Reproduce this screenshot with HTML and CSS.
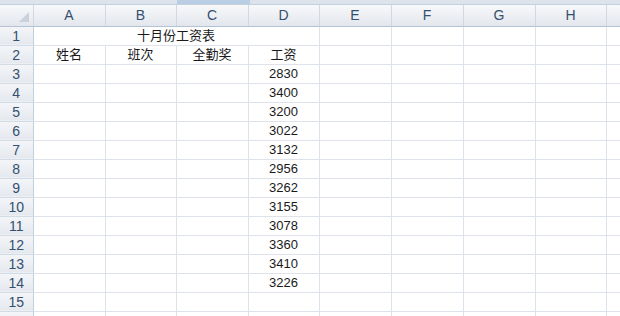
FILE: index.html
```html
<!DOCTYPE html>
<html>
<head>
<meta charset="utf-8">
<link rel="stylesheet" href="styles.css">
</head>
<body>
<div class="topstrip"><div class="sel"></div></div>
<table class="sheet">
<colgroup>
<col class="rh"><col class="c72"><col class="c71"><col class="c72"><col class="c71"><col class="c72"><col class="c72"><col class="c72"><col class="c71"><col class="crest">
</colgroup>
<tr class="hdr">
<th class="corner"><span class="tri"></span></th><th>A</th><th>B</th><th>C</th><th>D</th><th>E</th><th>F</th><th>G</th><th>H</th><th></th>
</tr>
<tr><th>1</th><td colspan="4">十月份工资表</td><td></td><td></td><td></td><td></td><td></td></tr>
<tr><th>2</th><td>姓名</td><td>班次</td><td>全勤奖</td><td>工资</td><td></td><td></td><td></td><td></td><td></td></tr>
<tr><th>3</th><td></td><td></td><td></td><td>2830</td><td></td><td></td><td></td><td></td><td></td></tr>
<tr><th>4</th><td></td><td></td><td></td><td>3400</td><td></td><td></td><td></td><td></td><td></td></tr>
<tr><th>5</th><td></td><td></td><td></td><td>3200</td><td></td><td></td><td></td><td></td><td></td></tr>
<tr><th>6</th><td></td><td></td><td></td><td>3022</td><td></td><td></td><td></td><td></td><td></td></tr>
<tr><th>7</th><td></td><td></td><td></td><td>3132</td><td></td><td></td><td></td><td></td><td></td></tr>
<tr><th>8</th><td></td><td></td><td></td><td>2956</td><td></td><td></td><td></td><td></td><td></td></tr>
<tr><th>9</th><td></td><td></td><td></td><td>3262</td><td></td><td></td><td></td><td></td><td></td></tr>
<tr><th>10</th><td></td><td></td><td></td><td>3155</td><td></td><td></td><td></td><td></td><td></td></tr>
<tr><th>11</th><td></td><td></td><td></td><td>3078</td><td></td><td></td><td></td><td></td><td></td></tr>
<tr><th>12</th><td></td><td></td><td></td><td>3360</td><td></td><td></td><td></td><td></td><td></td></tr>
<tr><th>13</th><td></td><td></td><td></td><td>3410</td><td></td><td></td><td></td><td></td><td></td></tr>
<tr><th>14</th><td></td><td></td><td></td><td>3226</td><td></td><td></td><td></td><td></td><td></td></tr>
<tr><th>15</th><td></td><td></td><td></td><td></td><td></td><td></td><td></td><td></td><td></td></tr>
<tr><th>16</th><td></td><td></td><td></td><td></td><td></td><td></td><td></td><td></td><td></td></tr>
</table>
</body>
</html>
```
FILE: styles.css
```css
html, body {
  margin: 0;
  padding: 0;
  background: #ffffff;
  overflow: hidden;
  width: 620px;
  height: 316px;
}
.topstrip {
  height: 5px;
  background: #dde3ea;
  border-bottom: 1px solid #c5d0dc;
  box-sizing: border-box;
  position: relative;
}
.sel {
  position: absolute;
  left: 177px;
  width: 73px;
  top: 0;
  height: 4px;
  background: #b9cde5;
}
.sheet {
  border-collapse: collapse;
  table-layout: fixed;
  width: 620px;
  font-family: "Liberation Sans", "Noto Sans CJK SC", sans-serif;
  font-size: 13px;
  color: #1a1a1a;
}
col.rh { width: 33px; }
col.c72 { width: 72px; }
col.c71 { width: 71px; }
col.crest { width: 14px; }
.sheet tr { height: 19px; }
.sheet td {
  border-right: 1px solid #dde2eb;
  border-bottom: 1px solid #dde2eb;
  text-align: center;
  padding: 0;
  height: 18px;
  line-height: 18px;
  white-space: nowrap;
  overflow: hidden;
}
.sheet th {
  background: linear-gradient(#f3f5f8, #e4e8ee);
  border-right: 1px solid #c3cfdc;
  border-bottom: 1px solid #d3dbe5;
  color: #34506f;
  font-weight: normal;
  font-size: 14px;
  padding: 0;
  height: 18px;
  line-height: 18px;
  text-align: center;
}
.sheet tr.hdr { height: 21px; }
.sheet tr.hdr th {
  height: 20px;
  line-height: 20px;
  border-bottom: 1px solid #b4c3d4;
  background: linear-gradient(#f7f8fa, #e2e6ec);
  border-right: 1px solid #d0d8e2;
}
.sheet th.corner {
  position: relative;
  border-right: 1px solid #b4c3d4;
}
.tri {
  position: absolute;
  right: 4px;
  bottom: 4px;
  width: 0;
  height: 0;
  border-left: 10px solid transparent;
  border-bottom: 10px solid #c9d1da;
}
```
